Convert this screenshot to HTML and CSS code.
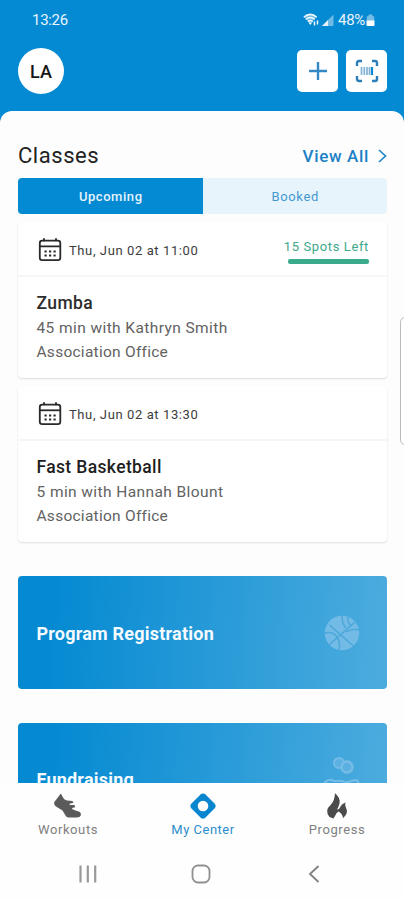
FILE: index.html
```html
<!DOCTYPE html>
<html lang="en">
<head>
<meta charset="utf-8">
<title>My Center</title>
<link rel="stylesheet" href="styles.css">
</head>
<body>
<div class="phone">
  <div class="status">
    <span class="time">13:26</span>
    <div class="status-right">
      <svg class="wifi" width="17" height="14" viewBox="0 0 17 14" fill="none" stroke="#fff" stroke-width="1.5"><path d="M.8 3.200Q7.3-1 13.8 3.200L7.300 11z" fill="#fff" opacity=".4" stroke="none"/><path d="M.8 4.2Q7.3-1.4 13.8 4.2M2.8 6.4q4.5-3.8 9 0M4.8 8.6q2.5-2 5 0" opacity=".9"/><path d="M5.5 9.5 7.3 12 9 9.5z" fill="#fff" stroke="none"/><path d="M11.500 8.500v4M14.5 7.500v4" stroke-width="1.4"/></svg>
      <svg class="signal" width="12" height="12" viewBox="0 0 12 12"><path d="M0 12 11.5.5V12z" fill="#fff" opacity=".42"/><path d="M0 12l6-6v6z" fill="#fff" opacity=".8"/></svg>
      <span class="percent">48%</span>
      <svg class="battery" width="9" height="13" viewBox="0 0 9 13"><path d="M2.6.6h3.8v1.6h1.8V7H.8V2.2h1.8z" fill="#fff" opacity=".45"/><path d="M.5 6.5h8V11a1 1 0 0 1-1 1h-6a1 1 0 0 1-1-1z" fill="#fff"/></svg>
    </div>
  </div>
  <header class="topbar">
    <div class="avatar">LA</div>
    <div class="actions">
      <button class="action" aria-label="Add"><svg width="20" height="20" viewBox="0 0 20 20" stroke="#3489c5" stroke-width="2.4"><path d="M10 1v18M1 10h18"/></svg></button>
      <button class="action" aria-label="Scan"><svg width="24" height="24" viewBox="0 0 24 24" fill="none" stroke="#2e7fb9" stroke-width="2.4"><path d="M2 7V4q0-2 2-2h3M17 2h3q2 0 2 2v3M22 17v3q0 2-2 2h-3M7 22H4q-2 0-2-2v-3"/><path d="M6.5 8v8M9.3 8v8M12 8v8M14.5 8v8" stroke-width="1.7" opacity=".6"/><path d="M17 8v8" stroke="#0788d2" stroke-width="2.2"/></svg></button>
    </div>
  </header>
  <main class="sheet">
    <div class="heading">
      <h1>Classes</h1>
      <a class="view-all"><span>View All</span><svg width="9" height="14" viewBox="0 0 9 14" fill="none" stroke="#2286c9" stroke-width="1.7"><path d="M1 1l6.5 6L1 13"/></svg></a>
    </div>
    <div class="tabs"><div class="tab on">Upcoming</div><div class="tab">Booked</div></div>
    <section class="class-card">
      <div class="when">
        <svg class="cal" width="24" height="24" viewBox="0 0 24 24" fill="none" stroke="#292929" stroke-width="1.8"><rect x="1.8" y="2.7" width="20.5" height="19.500" rx="2.4"/><path d="M1.8 8.300h20.500"/><path d="M6 .3v3M18 .3v3"/><path d="M6.500 13.500h2.200M11 13.500h2.200M15.500 13.500h2.200M6.500 17.500h2.200M11 17.500h2.200M15.500 17.500h2.200" stroke-width="2"/></svg>
        <span class="date">Thu, Jun 02 at 11:00</span>
        <div class="spots"><span>15 Spots Left</span><i></i></div>
      </div>
      <div class="info">
        <h2 class="zumba">Zumba</h2>
        <p class="coach">45 min with Kathryn Smith</p>
        <p>Association Office</p>
      </div>
    </section>
    <section class="class-card">
      <div class="when">
        <svg class="cal" width="24" height="24" viewBox="0 0 24 24" fill="none" stroke="#292929" stroke-width="1.8"><rect x="1.8" y="2.7" width="20.5" height="19.500" rx="2.4"/><path d="M1.8 8.300h20.500"/><path d="M6 .3v3M18 .3v3"/><path d="M6.500 13.500h2.200M11 13.500h2.200M15.500 13.500h2.200M6.500 17.500h2.200M11 17.500h2.200M15.500 17.500h2.200" stroke-width="2"/></svg>
        <span class="date">Thu, Jun 02 at 13:30</span>
      </div>
      <div class="info">
        <h2>Fast Basketball</h2>
        <p class="coach">5 min with Hannah Blount</p>
        <p>Association Office</p>
      </div>
    </section>
    <section class="banner">
      <h3>Program Registration</h3>
      <svg width="36" height="36" viewBox="0 0 36 36"><circle cx="18" cy="18" r="17.300" fill="#72bbe6"/><g fill="none" stroke="#4ba6d9" stroke-width="1.400"><path d="M5.500 10 30.500 32M31 7 5 30M1 18q8-2 12 4t2 13M18 1q0 8 4 12M24 2q-1 6 4 9M22 17q5-4 14-2"/></g></svg>
    </section>
    <section class="banner fund">
      <h3>Fundraising</h3>
      <svg width="36" height="44" viewBox="0 0 36 44" fill="none" stroke="#75bce6" stroke-width="2"><circle cx="15" cy="6" r="5" fill="#5bb0e1"/><circle cx="23" cy="10" r="5.500" fill="#5bb0e1" stroke-width="2.500"/><path d="M0 26q5-5 10-2h8q3 0 2 3h-7M20 26l11-3q4 0 3 3l-13 8H0"/></svg>
    </section>
  </main>
  <nav class="nav">
    <div class="item"><svg width="28" height="26" viewBox="0 0 28 26"><path d="M0 9.500 6.800.500 8.500 3.500Q10 7 13 7.500L18.500 8 19.500 9.700 15.500 10.700 15.800 12 20.500 12 21.200 14.200 18 14.900 18.500 16.200 21.500 17.500Q26.800 18.700 26.800 20.500V22.500Q26 24.600 23 24.600H14.500Q12.500 24.500 11.500 22.500L8.500 17.500 2 13.500Q0 12 0 9.500z" fill="#5a5a5a"/></svg><span>Workouts</span></div>
    <div class="item active"><svg width="28" height="26" viewBox="0 0 28 26"><path d="M11.500 1.600q2.500-2.400 5 0l9 8.900q2.300 2.500 0 5l-9 8.900q-2.500 2.400-5 0l-9-8.900q-2.300-2.500 0-5z" fill="#0785ce"/><circle cx="14" cy="13" r="5.300" fill="#fff"/></svg><span>My Center</span></div>
    <div class="item"><svg width="28" height="26" viewBox="0 0 28 26"><path d="M12 .300Q17.500 4.500 16.500 10.500 15.800 13.500 14 16.500 16.500 16.500 17.500 13.500 18.500 11 22.500 9.500 21.500 12.500 23 15 25 18.500 22.800 22L20 25.200Q19.500 20.500 15.500 18.500 13 20 12.300 22.500L10.500 25.500 6.500 24Q3.800 21 4.200 17.500 4.600 14.500 8 11.500 11.500 8 12 .300z" fill="#4b4b4b"/></svg><span>Progress</span></div>
  </nav>
  <div class="system">
    <svg width="18" height="18" viewBox="0 0 18 18" stroke="#999" stroke-width="2.200"><path d="M1.500 .500v17M8.800 .500v17M16.200 .500v17"/></svg>
    <svg width="20" height="20" viewBox="0 0 20 20" fill="none" stroke="#909090" stroke-width="1.800"><rect x="1.500" y="1.500" width="17" height="17" rx="5.500"/></svg>
    <svg width="12" height="18" viewBox="0 0 12 18" fill="none" stroke="#808080" stroke-width="1.800"><path d="M10.500 1 2 9l8.500 8"/></svg>
  </div>
  <div class="edge-handle"></div>
</div>
</body>
</html>
```
FILE: styles.css
```css
* { box-sizing: border-box; }
body { margin: 0; font-family: Roboto, "Liberation Sans", sans-serif; background: #fdfdfd; }
h1, h2, h3, p { margin: 0; }
.phone { position: relative; width: 404px; height: 900px; overflow: hidden; display: flex; flex-direction: column; background: #0489d3; }
.status { height: 40px; flex: none; padding: 0 29px 0 32px; display: flex; align-items: center; justify-content: space-between; color: #e9f6ff; font-size: 15px; }
.time { letter-spacing: -.3px; }
.status-right { display: flex; align-items: center; }
.signal { margin: 0 4px 0 2px; }
.percent { letter-spacing: -.3px; }
.battery { margin-left: 1px; }
.topbar { height: 71px; flex: none; padding: 8px 17px 0 18px; display: flex; justify-content: space-between; align-items: flex-start; }
.avatar { width: 46px; height: 46px; border-radius: 50%; background: #fff; color: #151515; display: flex; align-items: center; justify-content: center; font-size: 18px; font-weight: 500; }
.actions { display: flex; gap: 8px; padding-top: 2px; }
.action { width: 41px; height: 42px; padding: 0; border: 0; border-radius: 5px; background: #fff; display: flex; align-items: center; justify-content: center; }
.sheet { flex: 1; min-height: 0; overflow: hidden; background: #fdfdfd; border-radius: 12px 12px 0 0; padding: 25px 17px 0 18px; }
.heading { height: 42px; display: flex; justify-content: space-between; align-items: flex-start; }
.heading h1 { font-size: 22px; font-weight: 400; color: #222; letter-spacing: .55px; line-height: 39px; }
.view-all { display: flex; align-items: center; gap: 9px; color: #1c80c6; font-size: 17px; font-weight: 500; letter-spacing: .65px; line-height: 40px; }
.tabs { display: flex; height: 36px; border-radius: 4px; overflow: hidden; margin-bottom: 8px; }
.tab { flex: 1; display: flex; align-items: center; justify-content: center; font-size: 13px; letter-spacing: .65px; background: #e8f4fb; color: #4299d0; padding-left: 1px; }
.tab.on { background: #0489d3; color: #e4f4fd; font-weight: 500; letter-spacing: .55px; }
.class-card { height: 156px; margin-bottom: 8px; background: #fff; border-radius: 4px; box-shadow: 0 1px 2px rgba(0,0,0,.13); }
.when { height: 55px; border-bottom: 2px solid #f6f6f6; padding: 3px 18px 0 20px; display: flex; align-items: center; }
.date { margin-left: 7px; font-size: 13px; letter-spacing: .6px; color: #3c3c3c; }
.spots { margin-left: auto; align-self: flex-start; padding-top: 14px; display: flex; flex-direction: column; align-items: flex-end; font-size: 13px; letter-spacing: .62px; line-height: 16px; color: #3da88a; }
.spots i { width: 81px; height: 5px; border-radius: 2px; background: #3aab8c; margin-top: 4px; }
.info { padding: 14px 18px 0 18.5px; }
.info h2 { font-size: 17.5px; font-weight: 500; color: #1e1e1e; line-height: 25px; letter-spacing: .36px; }
.info .zumba { letter-spacing: .4px; color: #2d2d2d; }
.info p { font-size: 15.5px; line-height: 24px; color: #626262; letter-spacing: .26px; }
.info .coach { letter-spacing: .41px; }
.banner { height: 113px; margin: 34px 0; border-radius: 4px; background: linear-gradient(95deg, #058ad2 10%, #4dacde 100%); display: flex; align-items: center; justify-content: space-between; padding: 1px 27px 0 18.5px; }
.banner h3 { font-size: 18px; font-weight: 700; color: #f5fbff; letter-spacing: .22px; }
.banner.fund { padding-top: 0; padding-bottom: 1px; }
.nav { height: 64px; flex: none; background: #fefefe; display: flex; padding: 10px 0 0 1px; }
.item { flex: 1; display: flex; flex-direction: column; align-items: center; font-size: 13px; color: #808080; }
.item span { line-height: 16px; margin-top: 3px; letter-spacing: .6px; }
.item.active { color: #2c8dcc; padding-left: 1px; }
.item.active span { letter-spacing: .5px; }
.system { height: 53px; flex: none; background: #fefefe; display: flex; align-items: center; justify-content: space-between; padding: 0 84px 0 79px; }
.system svg:nth-child(2) { margin-right: 3px; }
.edge-handle { position: absolute; left: 400px; top: 317px; width: 12px; height: 128px; border: 1px solid #bbb; border-radius: 5px; background: #fff; }
```
